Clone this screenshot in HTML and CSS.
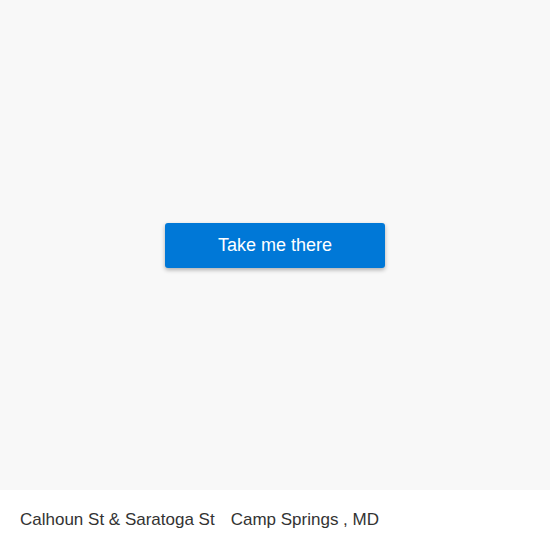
FILE: index.html
```html
<!DOCTYPE html>
<html lang="en">
<head>
  <meta charset="UTF-8" />
  <title>Calhoun St &amp; Saratoga St</title>
  <link rel="stylesheet" href="styles.css">
</head>
<body>
  <div class="map">
    <button class="go-btn">Take me there</button>
  </div>
  <div class="footer">
    <span class="stop-name">Calhoun St &amp; Saratoga St</span>
    <span class="stop-city">Camp Springs , MD</span>
  </div>
</body>
</html>
```

FILE: styles.css
```css
body {
  margin: 0;
  font-family: 'Liberation Sans', Arial, sans-serif;
  width: 550px;
  height: 550px;
  display: flex;
  flex-direction: column;
}
.map {
  height: 490px;
  background: #f8f8f8;
  display: flex;
  justify-content: center;
  align-items: center;
}
.go-btn {
  width: 220px;
  height: 45px;
  margin-top: 1px;
  background: #0078d7;
  color: #fff;
  border: none;
  border-radius: 3px;
  font-family: inherit;
  font-size: 18px;
  box-shadow: 0 2px 4px rgba(0, 0, 0, 0.3);
  cursor: pointer;
}
.footer {
  height: 60px;
  background: #fff;
  display: flex;
  align-items: center;
  gap: 16px;
  padding: 0 20px;
  font-size: 17px;
  color: #333;
}
```
